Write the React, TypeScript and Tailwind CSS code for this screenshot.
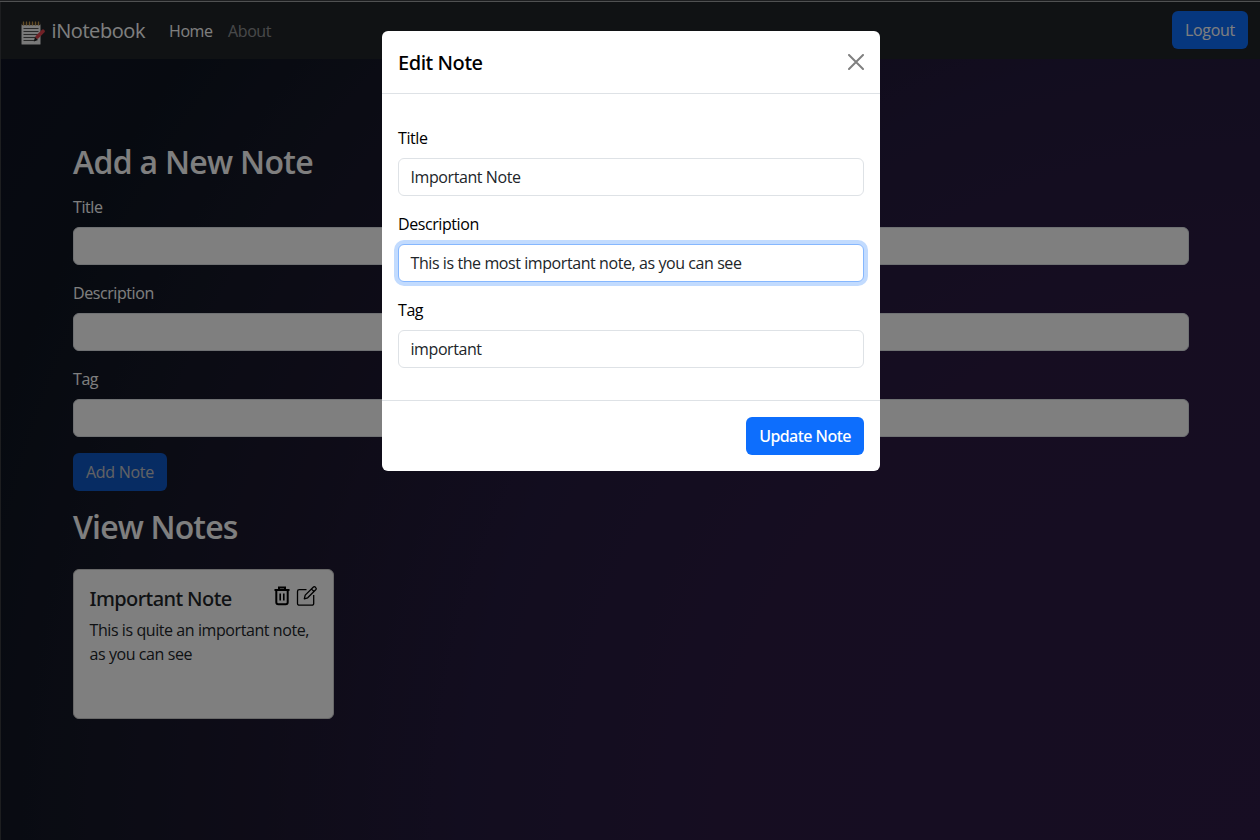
import type { ReactNode } from "react";

function NotebookLogo() {
  return (
    <svg width="24" height="24" viewBox="0 0 24 24" className="mt-[6px] shrink-0">
      <rect x="0.5" y="3" width="19" height="20.5" rx="0.6" fill="#f2f2f2" />
      <rect x="0.5" y="1.5" width="19" height="2.6" fill="#3a342c" />
      <g stroke="#c69a4c" strokeWidth="1.2">
        <path d="M2.5 0.5v4M5.5 0.5v4M8.5 0.5v4M11.5 0.5v4M14.5 0.5v4M17.5 0.5v4" />
      </g>
      <g stroke="#555" strokeWidth="1.1">
        <path d="M2.5 7.5h15M2.5 10.5h15M2.5 13.5h15M2.5 16.5h12M2.5 19.5h12" />
      </g>
      <path d="M16.2 16L22 10.2" stroke="#e0434d" strokeWidth="3.6" strokeLinecap="round" />
      <path d="M12.8 20.5l1.2-4.4 3 2.8z" fill="#222" />
    </svg>
  );
}

function Trash() {
  return (
    <svg width="16" height="20" viewBox="0 0 16 20" fill="none" stroke="#000" strokeWidth="2">
      <path d="M0.5 4h15M5 4V1.5h6V4M2.3 4v12.2a2 2 0 0 0 2 2h7.4a2 2 0 0 0 2-2V4" />
      <path d="M6.2 7.5v7M9.8 7.5v7" strokeWidth="1.6" />
    </svg>
  );
}

function Edit() {
  return (
    <svg width="21" height="20" viewBox="0 0 21 20" fill="none" stroke="#000" strokeWidth="1.3" strokeLinejoin="round">
      <path d="M10.5 3.7H3.3a1.8 1.8 0 0 0-1.8 1.8v11.9a1.8 1.8 0 0 0 1.8 1.8h12.6a1.8 1.8 0 0 0 1.8-1.8V9" />
      <path d="M8.3 12.8l.9-3.7 8-7.9a1.6 1.6 0 0 1 2.2 0l.3.4a1.6 1.6 0 0 1 0 2.2l-8 8zM15.4 2.9l2.6 2.7" />
    </svg>
  );
}

function Field({ label, value = "", focus = false }: { label: string; value?: string; focus?: boolean }) {
  return (
    <div className="mb-4">
      <div className="mb-2 h-6">{label}</div>
      <div
        className={
          focus
            ? "h-[38px] rounded-md border border-[#86b7fe] bg-white px-[11.5px] py-[6px] text-[#212529] shadow-[0_0_0_4px_#c2dbfe]"
            : "h-[38px] rounded-md border border-[#dee2e6] bg-white px-[11.5px] py-[6px] text-[#212529]"
        }
      >
        {value}
      </div>
    </div>
  );
}

function Button({ children, strong = false }: { children: ReactNode; strong?: boolean }) {
  return (
    <button
      className={
        strong
          ? "h-[38px] w-[118px] rounded-md bg-[#0d6efd] font-['Noto_Sans',sans-serif] font-medium tracking-[-0.55px] whitespace-nowrap text-white"
          : "h-[38px] rounded-md bg-[#0d6efd] px-[13px] tracking-[-0.3px] whitespace-nowrap text-white"
      }
    >
      {children}
    </button>
  );
}

export default function App() {
  return (
    <div className="relative h-[840px] w-[1260px] overflow-hidden bg-[#3a3c40] font-['Open_Sans','Noto_Sans',sans-serif] text-base leading-6 tracking-[-0.42px]">
      <div className="h-[2px] border-b border-[#a0a2a5]" />
      <div className="ml-px h-[838px] bg-[radial-gradient(circle_farthest-corner_at_bottom_right,#2e1a46_0%,#2c1a43_36%,#251a3e_53%,#1d1930_66%,#151827_79%,#0e1521_88%,#0e1224_100%)] text-white">
        <nav className="flex h-[57px] items-center bg-[#212529] pr-3 pb-px pl-5">
          <NotebookLogo />
          <span className="mt-[2px] ml-[6.5px] text-xl leading-6">iNotebook</span>
          <span className="mt-px ml-6">Home</span>
          <span className="mt-px ml-[15.5px] text-white/50">About</span>
          <div className="ml-auto">
            <Button>Logout</Button>
          </div>
        </nav>
        <main className="w-[1188px] pt-[84px] pl-[72px]">
          <h1 className="mb-[14px] text-[32px] leading-[38px] font-semibold tracking-[-0.7px]">Add a New Note</h1>
          <Field label="Title" />
          <Field label="Description" />
          <Field label="Tag" />
          <div className="opacity-75">
            <Button>Add Note</Button>
          </div>
          <h1 className="mt-[17px] text-[32px] leading-[38px] font-semibold tracking-[-0.85px]">View Notes</h1>
          <article className="mt-[23px] h-[150px] w-[261px] rounded-md border border-[#d0d0d0] bg-white py-4 pr-4 pl-[15.5px] text-[#212529]">
            <div className="mb-2 flex h-6 items-start">
              <h2 className="mt-px font-['Noto_Sans',sans-serif] text-xl leading-6 font-medium tracking-[-0.6px]">
                Important Note
              </h2>
              <div className="ml-auto flex gap-[6px]">
                <Trash />
                <Edit />
              </div>
            </div>
            <p>This is quite an important note, as you can see</p>
          </article>
        </main>
      </div>
      <div className="absolute inset-0 bg-black/50" />
      <section className="absolute top-[31px] left-[382px] w-[498px] rounded-md bg-white text-black">
        <header className="flex h-[63px] items-center justify-between border-b border-[#dee2e6] px-4">
          <h2 className="mt-[2px] font-['Noto_Sans',sans-serif] text-xl font-medium tracking-[-0.45px]">Edit Note</h2>
          <svg width="16" height="16" viewBox="0 0 16 16" stroke="#808080" strokeWidth="2" strokeLinecap="round">
            <path d="M1 1l14 14M15 1L1 15" />
          </svg>
        </header>
        <div className="h-[306px] px-4 pt-8">
          <Field label="Title" value="Important Note" />
          <Field label="Description" value="This is the most important note, as you can see" focus />
          <Field label="Tag" value="important" />
        </div>
        <footer className="flex h-[71px] items-center justify-end border-t border-[#dee2e6] px-4">
          <Button strong>Update Note</Button>
        </footer>
      </section>
    </div>
  );
}
